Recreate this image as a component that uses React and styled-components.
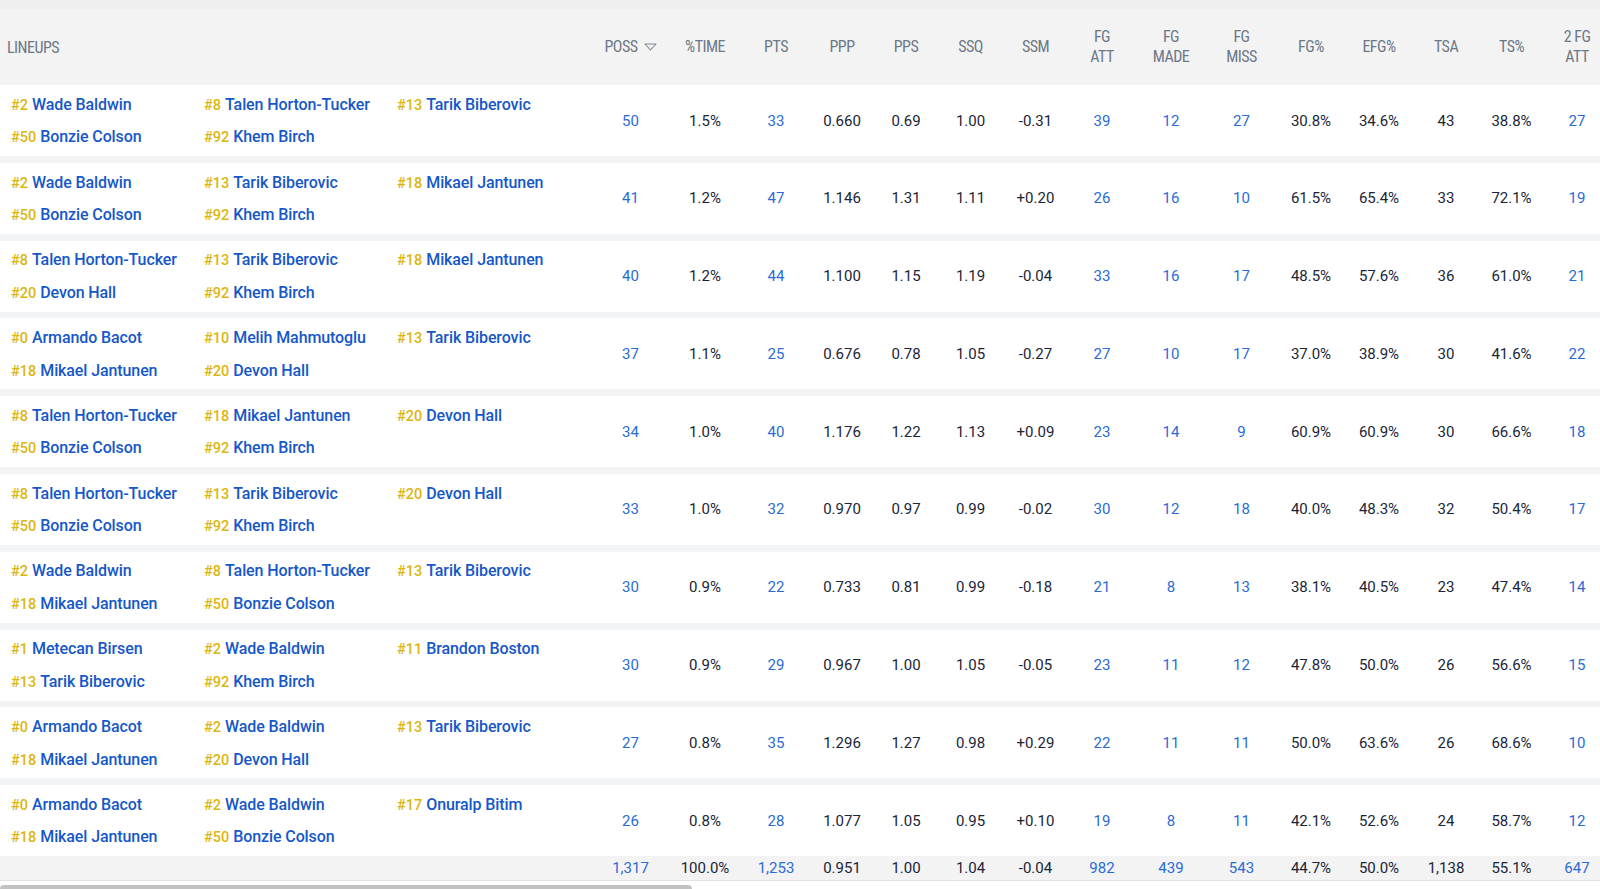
import React from "react";
import styled, { createGlobalStyle } from "styled-components";

const GlobalStyle = createGlobalStyle`
  html, body {
    margin: 0;
    padding: 0;
    background: #fff;
    overflow: hidden;
  }
  * {
    box-sizing: border-box;
  }
`;

const COLS =
  "593px 75px 74px 68px 64px 64px 65px 65px 68px 70px 71px 68px 68px 66px 65px 66px 1fr";

const HEADERS = [
  ["POSS"],
  ["%TIME"],
  ["PTS"],
  ["PPP"],
  ["PPS"],
  ["SSQ"],
  ["SSM"],
  ["FG", "ATT"],
  ["FG", "MADE"],
  ["FG", "MISS"],
  ["FG%"],
  ["EFG%"],
  ["TSA"],
  ["TS%"],
  ["2 FG", "ATT"],
];

// columns that are drawn as links
const LINK_COLS = [0, 2, 7, 8, 9, 14];

const rows = [
  {
    lineup: [
      [2, "Wade Baldwin"],
      [8, "Talen Horton-Tucker"],
      [13, "Tarik Biberovic"],
      [50, "Bonzie Colson"],
      [92, "Khem Birch"],
    ],
    stats: ["50", "1.5%", "33", "0.660", "0.69", "1.00", "-0.31", "39", "12", "27", "30.8%", "34.6%", "43", "38.8%", "27"],
  },
  {
    lineup: [
      [2, "Wade Baldwin"],
      [13, "Tarik Biberovic"],
      [18, "Mikael Jantunen"],
      [50, "Bonzie Colson"],
      [92, "Khem Birch"],
    ],
    stats: ["41", "1.2%", "47", "1.146", "1.31", "1.11", "+0.20", "26", "16", "10", "61.5%", "65.4%", "33", "72.1%", "19"],
  },
  {
    lineup: [
      [8, "Talen Horton-Tucker"],
      [13, "Tarik Biberovic"],
      [18, "Mikael Jantunen"],
      [20, "Devon Hall"],
      [92, "Khem Birch"],
    ],
    stats: ["40", "1.2%", "44", "1.100", "1.15", "1.19", "-0.04", "33", "16", "17", "48.5%", "57.6%", "36", "61.0%", "21"],
  },
  {
    lineup: [
      [0, "Armando Bacot"],
      [10, "Melih Mahmutoglu"],
      [13, "Tarik Biberovic"],
      [18, "Mikael Jantunen"],
      [20, "Devon Hall"],
    ],
    stats: ["37", "1.1%", "25", "0.676", "0.78", "1.05", "-0.27", "27", "10", "17", "37.0%", "38.9%", "30", "41.6%", "22"],
  },
  {
    lineup: [
      [8, "Talen Horton-Tucker"],
      [18, "Mikael Jantunen"],
      [20, "Devon Hall"],
      [50, "Bonzie Colson"],
      [92, "Khem Birch"],
    ],
    stats: ["34", "1.0%", "40", "1.176", "1.22", "1.13", "+0.09", "23", "14", "9", "60.9%", "60.9%", "30", "66.6%", "18"],
  },
  {
    lineup: [
      [8, "Talen Horton-Tucker"],
      [13, "Tarik Biberovic"],
      [20, "Devon Hall"],
      [50, "Bonzie Colson"],
      [92, "Khem Birch"],
    ],
    stats: ["33", "1.0%", "32", "0.970", "0.97", "0.99", "-0.02", "30", "12", "18", "40.0%", "48.3%", "32", "50.4%", "17"],
  },
  {
    lineup: [
      [2, "Wade Baldwin"],
      [8, "Talen Horton-Tucker"],
      [13, "Tarik Biberovic"],
      [18, "Mikael Jantunen"],
      [50, "Bonzie Colson"],
    ],
    stats: ["30", "0.9%", "22", "0.733", "0.81", "0.99", "-0.18", "21", "8", "13", "38.1%", "40.5%", "23", "47.4%", "14"],
  },
  {
    lineup: [
      [1, "Metecan Birsen"],
      [2, "Wade Baldwin"],
      [11, "Brandon Boston"],
      [13, "Tarik Biberovic"],
      [92, "Khem Birch"],
    ],
    stats: ["30", "0.9%", "29", "0.967", "1.00", "1.05", "-0.05", "23", "11", "12", "47.8%", "50.0%", "26", "56.6%", "15"],
  },
  {
    lineup: [
      [0, "Armando Bacot"],
      [2, "Wade Baldwin"],
      [13, "Tarik Biberovic"],
      [18, "Mikael Jantunen"],
      [20, "Devon Hall"],
    ],
    stats: ["27", "0.8%", "35", "1.296", "1.27", "0.98", "+0.29", "22", "11", "11", "50.0%", "63.6%", "26", "68.6%", "10"],
  },
  {
    lineup: [
      [0, "Armando Bacot"],
      [2, "Wade Baldwin"],
      [17, "Onuralp Bitim"],
      [18, "Mikael Jantunen"],
      [50, "Bonzie Colson"],
    ],
    stats: ["26", "0.8%", "28", "1.077", "1.05", "0.95", "+0.10", "19", "8", "11", "42.1%", "52.6%", "24", "58.7%", "12"],
  },
];

const totals = ["1,317", "100.0%", "1,253", "0.951", "1.00", "1.04", "-0.04", "982", "439", "543", "44.7%", "50.0%", "1,138", "55.1%", "647"];

const SortIcon = () => (
  <svg width="13" height="8" viewBox="0 0 13 8" fill="none">
    <path d="M1 1h11L6.5 7z" stroke="#7d8793" strokeWidth="1.1" strokeLinejoin="round" />
  </svg>
);

const App = () => {
  return (
    <Page>
      <GlobalStyle />
      <Scroller>
        <Table>
          <TopBand />
          <HeaderRow>
            <HeadLabel>LINEUPS</HeadLabel>
            {HEADERS.map((lines, i) => (
              <HeadCell key={i}>
                <HeadText>
                  {lines.map((l) => (
                    <span key={l}>{l}</span>
                  ))}
                </HeadText>
                {i === 0 && <SortIcon />}
              </HeadCell>
            ))}
            <span />
          </HeaderRow>
          <Body>
            {rows.map((row, r) => (
              <Row key={r}>
                <Lineup>
                  {row.lineup.map(([num, name]) => (
                    <Player key={num}>
                      <Jersey>#{num}</Jersey>
                      <Name>{name}</Name>
                    </Player>
                  ))}
                </Lineup>
                {row.stats.map((v, i) => (
                  <Cell key={i} $link={LINK_COLS.includes(i)}>
                    {v}
                  </Cell>
                ))}
                <span />
              </Row>
            ))}
          </Body>
          <TotalRow>
            <span />
            {totals.map((v, i) => (
              <Cell key={i} $link={LINK_COLS.includes(i)}>
                {v}
              </Cell>
            ))}
            <span />
          </TotalRow>
        </Table>
      </Scroller>
      <ScrollTrack>
        <ScrollThumb />
      </ScrollTrack>
    </Page>
  );
};

export default App;

const Page = styled.div`
  width: 100vw;
  height: 889px;
  background: #fff;
  overflow: hidden;
`;
const Scroller = styled.div`
  width: 100%;
  overflow: hidden;
`;
const Table = styled.div`
  width: 3700px;
  display: flex;
  flex-direction: column;
`;
const TopBand = styled.div`
  height: 9px;
  background: #efeff0;
`;
const HeaderRow = styled.div`
  height: 76px;
  display: grid;
  grid-template-columns: ${COLS};
  align-items: center;
  background: #f3f3f4;
  color: #6c7886;
  font-family: "Liberation Sans Narrow", "Roboto Condensed", Roboto, sans-serif;
  font-size: 16px;
  letter-spacing: -0.5px;
`;
const HeadLabel = styled.div`
  padding-left: 7px;
`;
const HeadCell = styled.div`
  display: flex;
  justify-content: center;
  align-items: center;
  gap: 6px;
`;
const HeadText = styled.div`
  display: flex;
  flex-direction: column;
  align-items: center;
  line-height: 20px;
  span {
    white-space: nowrap;
  }
`;
const Body = styled.div`
  display: flex;
  flex-direction: column;
  gap: 6.8px;
  background: #f3f4f5;
`;
const Row = styled.div`
  height: 71px;
  display: grid;
  grid-template-columns: ${COLS};
  align-items: center;
  background: #fff;
`;
const Lineup = styled.div`
  display: grid;
  grid-template-columns: repeat(3, 193px);
  grid-auto-rows: 32.6px;
  align-items: center;
  padding-left: 11px;
`;
const Player = styled.div`
  display: flex;
  align-items: baseline;
  white-space: nowrap;
  font-family: Roboto, "Noto Sans", sans-serif;
`;
const Jersey = styled.span`
  font-size: 14.5px;
  font-weight: 500;
  color: #dcb60f;
  margin-right: 4px;
`;
const Name = styled.span`
  font-size: 16px;
  font-weight: 500;
  color: #1657c9;
  letter-spacing: -0.1px;
`;
const Cell = styled.div`
  text-align: center;
  font-family: Roboto, "Noto Sans", sans-serif;
  font-size: 15px;
  color: ${(props) => (props.$link ? "#2a6bd6" : "#1a2538")};
`;
const TotalRow = styled.div`
  height: 25px;
  display: grid;
  grid-template-columns: ${COLS};
  align-items: center;
  background: #f3f3f4;
  border-bottom: 1px solid #e2e2e3;
`;
const ScrollTrack = styled.div`
  width: 100%;
  height: 8px;
  margin-top: 4px;
`;
const ScrollThumb = styled.div`
  width: 692px;
  height: 100%;
  background: #c2c2c2;
  border-radius: 4px;
`;
